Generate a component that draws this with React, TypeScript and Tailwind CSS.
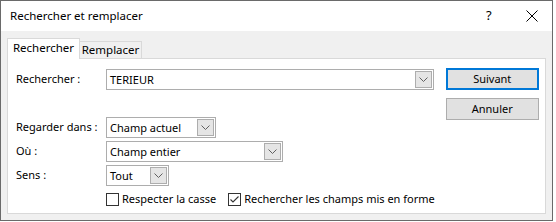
import React from "react";

function Chevron() {
  return (
    <svg width="9" height="5" viewBox="0 0 9 5" className="block">
      <path d="M0.5 0.5 L4.5 4.5 L8.5 0.5" fill="none" stroke="#606060" strokeWidth="1" />
    </svg>
  );
}

function Combo({ value, width }: { value: string; width: string }) {
  return (
    <div className={`${width} h-[21px] shrink-0 border border-[#adadad] bg-white flex items-center pl-[3px] pr-px`}>
      <span className="flex-1 leading-none whitespace-nowrap">{value}</span>
      <div className="w-[17px] h-[17px] border border-[#adadad] bg-[#e5e5e5] flex items-center justify-center">
        <Chevron />
      </div>
    </div>
  );
}

function Checkbox({ checked, label }: { checked?: boolean; label: string }) {
  return (
    <label className="flex items-center gap-[3px] shrink-0 whitespace-nowrap">
      <span className="w-[13px] h-[13px] border border-[#333333] bg-white flex items-center justify-center">
        {checked && (
          <svg width="11" height="11" viewBox="0 0 11 11" className="block">
            <path d="M1.5 5.5 L4 8 L9.5 2.5" fill="none" stroke="#333333" strokeWidth="1.1" />
          </svg>
        )}
      </span>
      <span>{label}</span>
    </label>
  );
}

export default function App() {
  return (
    <div className="w-[556px] h-[222px] bg-white font-['Noto_Sans',sans-serif] text-[11px] text-black whitespace-nowrap">
      <div className="w-[553px] h-[221px] border border-[#6a6a6a] bg-[#f0f0f0] flex flex-col">
        {/* Barre de titre */}
        <div className="h-[30px] bg-white flex items-center pl-[9px] shrink-0 text-[11.5px]">
          <span className="flex-1">Rechercher et remplacer</span>
          <span className="w-[10px] mr-[30px] text-[13px]">?</span>
          <svg width="12" height="12" viewBox="0 0 12 12" className="mr-[14px]">
            <path d="M0.5 0.5 L11.5 11.5 M11.5 0.5 L0.5 11.5" stroke="#000" strokeWidth="1" />
          </svg>
        </div>

        <div className="px-[6px] pt-[7px] flex flex-col flex-1">
          {/* Onglets */}
          <div className="flex items-end h-[20px] relative z-10">
            <div className="w-[73px] h-[21px] -mb-px bg-white border border-b-0 border-[#d9d9d9] flex items-center justify-center pb-[2px] text-[11.5px]">
              Rechercher
            </div>
            <div className="w-[62px] h-[17px] bg-[#f0f0f0] border border-l-0 border-b-0 border-[#d9d9d9] flex items-center justify-center text-[11.5px]">
              Remplacer
            </div>
          </div>

          {/* Panneau */}
          <div className="h-[156px] bg-white border border-[#d9d9d9] flex pl-[8px] pt-[10px]">
            <div className="flex flex-col">
              <div className="flex items-center h-[21px]">
                <span className="w-[90px] shrink-0">Rechercher :</span>
                <Combo value="TERIEUR" width="w-[328px]" />
              </div>
              <div className="flex items-center h-[21px] mt-[27px]">
                <span className="w-[90px] shrink-0">Regarder dans :</span>
                <Combo value="Champ actuel" width="w-[110px]" />
              </div>
              <div className="flex items-center h-[21px] mt-[3px]">
                <span className="w-[90px] shrink-0">Où :</span>
                <Combo value="Champ entier" width="w-[177px]" />
              </div>
              <div className="flex items-center h-[21px] mt-[3px]">
                <span className="w-[90px] shrink-0">Sens :</span>
                <Combo value="Tout" width="w-[63px]" />
              </div>
              <div className="flex items-center h-[13px] mt-[7px] pl-[90px] gap-[12px]">
                <Checkbox label="Respecter la casse" />
                <Checkbox checked label="Rechercher les champs mis en forme" />
              </div>
            </div>

            <div className="flex flex-col ml-[11px] -mt-px gap-[8px] shrink-0">
              <button className="w-[93px] h-[22px] border-2 border-[#0078d7] bg-[#e1e1e1] flex items-center justify-center">
                Suivant
              </button>
              <button className="w-[93px] h-[22px] border border-[#adadad] bg-[#e1e1e1] flex items-center justify-center">
                Annuler
              </button>
            </div>
          </div>
        </div>
      </div>
    </div>
  );
}
